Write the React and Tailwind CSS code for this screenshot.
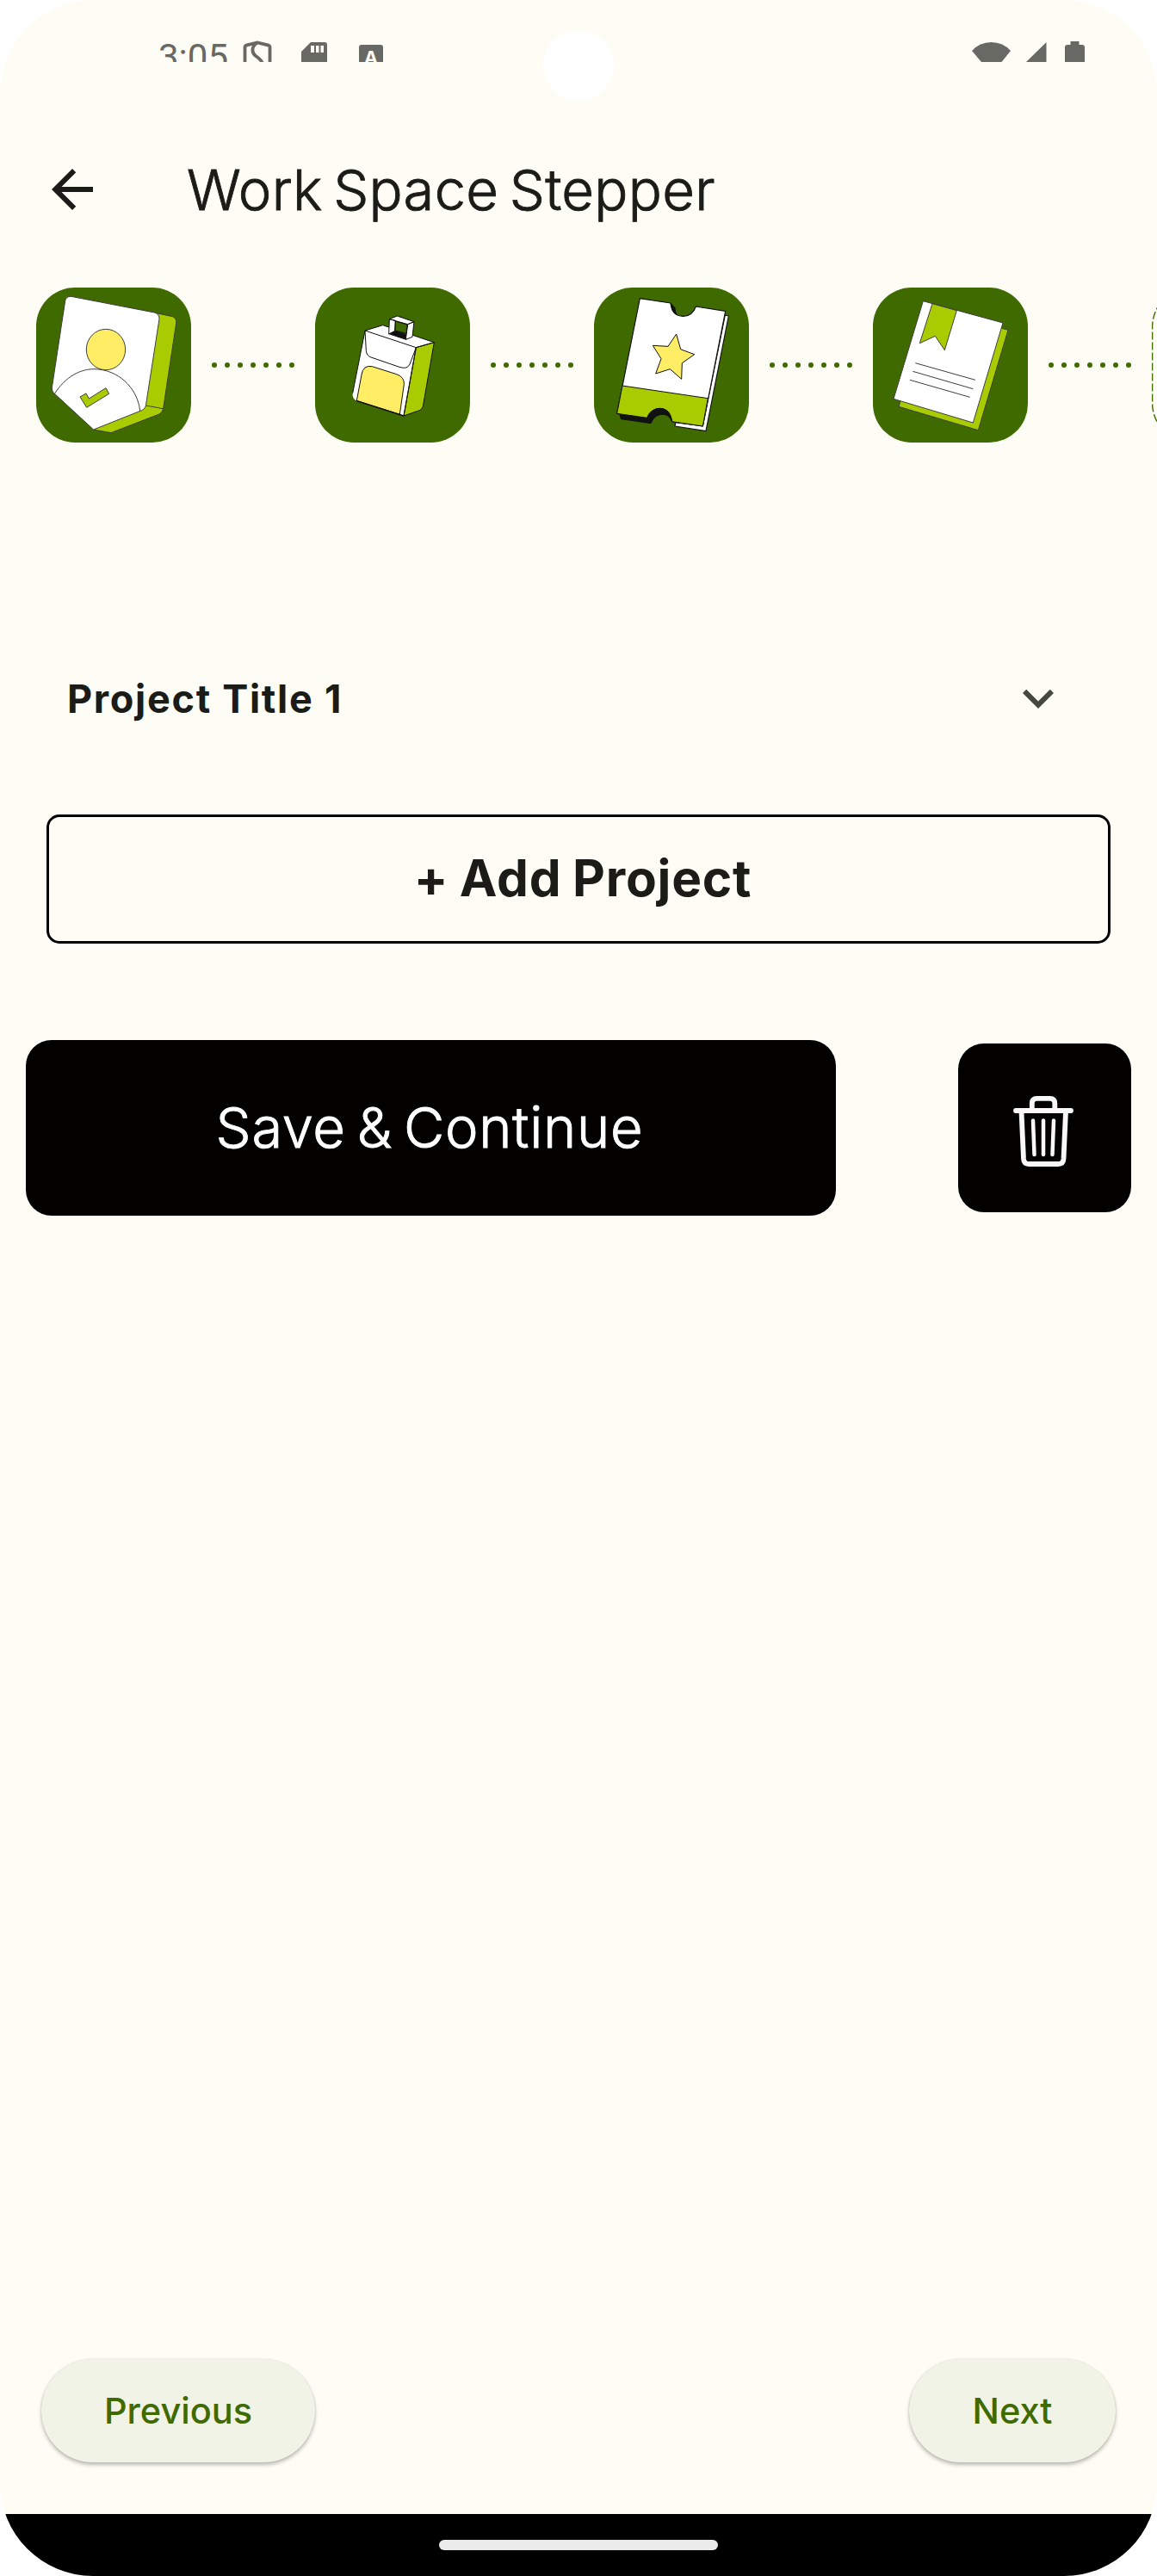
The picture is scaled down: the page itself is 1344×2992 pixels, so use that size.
const tileSvg = 'block size-full';

function BadgeArt() {
  return (
    <svg viewBox="66 42 540 540" className={tileSvg} stroke="#3f3f3f" strokeWidth="3" strokeLinejoin="round">
      <path d="M485 131 L541 143 Q556 148 554 166 L509 463 Q507 477 495 483 L327 548 L266 537 L440 440Z" fill="#a9cc00" />
      <path d="M188 73 L478 129 Q496 134 495 152 L449 448 Q448 463 434 470 L266 537 L127 409 Q121 404 121 391 L167 89 Q170 72 188 73Z" fill="#fff" />
      <path d="M131 411 C168 353 220 325 270 326 C350 328 418 388 428 471" fill="none" />
      <ellipse cx="309" cy="258" rx="68" ry="71" fill="#ffee65" />
      <path d="M448 453 L509 464" fill="none" />
      <path d="M219 423 L240 411 L250 429 L309 392 L320 412 L242 460Z" fill="#a9cc00" strokeLinejoin="miter" />
    </svg>
  );
}

function BackpackArt() {
  return (
    <svg viewBox="48 42 540 540" className={tileSvg} stroke="#111" strokeWidth="3" strokeLinejoin="round">
      <path d="M222 192 L284 173 L463 233 L400 251 L357 489 L192 436 Q177 428 179 410Z" fill="#fff" stroke="none" />
      <path d="M400 251 L463 233 L424 456 Q422 465 412 470 L357 489Z" fill="#a9cc00" />
      <path d="M179 410 L222 192 L284 173 L463 233 L400 251 L222 192 M400 251 L357 489" fill="none" />
      <path d="M222 192 L226 262 Q227 279 243 285 L342 319 Q370 328 378 309 L400 251" fill="none" />
      <path d="M193 436 L210 346 Q215 311 247 317 L332 344 Q360 354 358 379 L343 484Z" fill="#ffee65" />
      <path d="M193 437 L357 489" fill="none" strokeWidth="4" />
      <path d="M305 203 L327 192 L369 206 L365 223Z" fill="#111" />
      <path d="M307 152 L328 157 L326 193 L305 204Z M371 170 L393 161 L387 214 L364 223Z M307 152 L334 141 L393 161 L371 170Z" fill="#fff" />
      <path d="M328 159 L369 171 L366 202 L327 192Z" fill="#3e6a00" />
    </svg>
  );
}

function TicketArt() {
  return (
    <svg viewBox="30 42 540 540" className={tileSvg} stroke="#111" strokeWidth="3" strokeLinejoin="round">
      <path d="M487 138 L499 141 L420 542 L312 525 L314 512 L409 524Z" fill="#fff" strokeWidth="3.5" />
      <path d="M120 486 L216 496 Q232 462 262 462 Q290 466 301 497 L303 510 C290 482 275 484 266 484 C244 486 235 500 228 515 L124 500Z" fill="#111" />
      <path d="M190 80 L297 96 Q302 143 342 142 Q374 140 385 108 L488 124 L409 525 L302 509 C298 480 282 463 260 463 C236 464 221 478 215 496 L110 481Z" fill="#fff" strokeWidth="3.5" />
      <path d="M129 384 L427 428 L409 525 L302 509 C298 480 282 463 260 463 C236 464 221 478 215 496 L110 481Z" fill="#a9cc00" />
      <path d="M297 96 L300 110 Q304 130 318 136 Q312 127 312 113Z" fill="#111" />
      <path d="M217 495 C224 475 240 463 260 463 C285 464 298 480 301 507 C293 488 282 483 266 484 C246 485 236 497 228 513Z" fill="#111" />
      <path d="M317 204 L332 257 L380 275 L337 305 L335 361 L295 326 L245 342 L264 290 L235 244 L288 247Z" fill="#ffee65" />
    </svg>
  );
}

function DocumentArt() {
  return (
    <svg viewBox="30 42 540 540" className={tileSvg} stroke="#3f3f3f" strokeWidth="3">
      <path d="M226 115 L501 190 L397 539 L120 457Z" fill="#a9cc00" />
      <path d="M205 89 L483 165 L379 513 L102 430Z" fill="#fff" />
      <path d="M237 98 L322 122 L280 260 L247 211 L193 236Z" fill="#a9cc00" />
      <path d="M178 305 L387 364 M169 334 L379 395 M159 364 L368 424" fill="none" />
    </svg>
  );
}

function Connector() {
  return (
    <div className="mx-6 flex shrink-0 gap-[9px]">
      {[0, 1, 2, 3, 4, 5, 6].map((i) => (
        <span key={i} className="size-1.5 rounded-full bg-[#3e6a00]" />
      ))}
    </div>
  );
}

function StatusBar() {
  return (
    <div className="flex h-[72px] items-start justify-between overflow-hidden pr-[84px] pl-[184px] text-[#686864]">
      <div className="flex items-start">
        <span className="mt-[46px] w-[98px] font-['Roboto',sans-serif] text-[42px] leading-[42px] whitespace-nowrap">3:05</span>
        <svg className="mt-[47px] h-[25px] w-[34px]" viewBox="0 0 34 25" fill="none" stroke="currentColor" strokeWidth="3.8">
          <path d="M2.500 26V8Q2.500 6.200 4 5.700L17 2.500L30 5.700Q31.500 6.200 31.500 8V26M16.500 3C10 7 10 14 15 18C19 21 22 23 23 27" />
        </svg>
        <svg className="mt-[48px] ml-[34px] h-6 w-[30px]" viewBox="0 0 30 24">
          <path d="M0 12L11 1H27Q30 1 30 4V24H0Z" fill="currentColor" />
          <path d="M11 5h4v8h-4zM17 5h3.500v8H17zM22.500 5H26v8h-3.500z" fill="#fdfdf5" />
        </svg>
        <div className="mt-[52px] ml-[37px] h-8 w-7 rounded-[3px] bg-[#686864] text-center text-[22px] leading-[30px] font-bold text-[#fdfdf5]">A</div>
      </div>
      <svg className="mt-[47px] h-[25px] w-[131px]" viewBox="1129 47 131 25" fill="currentColor">
        <path d="M1129 59Q1138 49 1151.500 49Q1165 49 1174 59L1163.500 72H1140Z" />
        <path d="M1192 72L1215.500 49V72Z" />
        <path d="M1243.500 48H1253.500V52H1257Q1260 52 1260 55V72H1237V55Q1237 52 1240 52H1243.500Z" />
      </svg>
    </div>
  );
}

export default function App() {
  return (
    <div className="h-[2992px] w-[1344px] overflow-hidden bg-white">
      <div className="relative flex h-full flex-col overflow-hidden rounded-[108px] bg-[#fdfdf5] font-['Inter',sans-serif] text-[#1b1c18]">
        <StatusBar />
        <div className="absolute top-[35px] left-[631px] size-[82px] rounded-full bg-white" />

        <header className="mt-[52px] flex h-[192px] items-center pl-12">
          <svg className="size-[72px]" viewBox="0 0 24 24" fill="currentColor">
            <path d="M20 11H7.830l5.590-5.590L12 4l-8 8 8 8 1.410-1.410L7.830 13H20v-2z" />
          </svg>
          <h1 className="ml-[97px] pt-px text-[65px] leading-[78px] font-light tracking-[0.3px] whitespace-nowrap [-webkit-text-stroke:0.9px_currentColor] [word-spacing:-6px]">Work Space Stepper</h1>
        </header>

        <div className="mt-[18px] flex h-[180px] items-center overflow-hidden pl-[42px]">
          {[BadgeArt, BackpackArt, TicketArt, DocumentArt].map((Art, i) => (
            <div key={i} className="flex shrink-0 items-center">
              <div className="size-[180px] shrink-0 rounded-[45px] bg-[#3e6a00]">
                <Art />
              </div>
              <Connector />
            </div>
          ))}
          <svg className="size-[180px] shrink-0" viewBox="0 0 180 180" fill="none" stroke="#3e6a00" strokeWidth="1.4">
            <rect x="0.600" y="0.600" width="178.800" height="178.800" rx="45" strokeDasharray="9 3" />
          </svg>
        </div>

        <div className="mt-[225px] flex h-[144px] items-center justify-between pr-[102px] pl-[78px]">
          <span className="pt-[2px] text-[45px] leading-[60px] font-bold tracking-[1.7px] whitespace-nowrap">Project Title 1</span>
          <svg className="size-[72px]" viewBox="0 0 24 24" fill="#44483d">
            <path d="M16.590 8.590L12 13.170 7.410 8.590 6 10l6 6 6-6z" />
          </svg>
        </div>

        <button className="mx-[54px] mt-[63px] flex h-[150px] items-center justify-center rounded-[15px] border-3 border-black pb-[3px] pl-[10px] text-[58.500px] leading-[72px] font-bold tracking-[0.8px] whitespace-nowrap [word-spacing:-2px]">
          + Add Project
        </button>

        <div className="mt-[112px] flex items-center justify-between pr-[30px] pl-[30px]">
          <button className="flex h-[204px] w-[941px] items-center justify-center rounded-[30px] bg-[#030000] pr-[3px] text-[65px] leading-[78px] font-light tracking-[0.7px] whitespace-nowrap text-white [-webkit-text-stroke:0.9px_currentColor] [word-spacing:-6px]">
            Save &amp; Continue
          </button>
          <button className="flex h-[196px] w-[201px] items-center justify-center rounded-[30px] bg-[#030000]">
            <svg className="mt-2 mr-[3px] h-[84px] w-[72px]" viewBox="1176 1272 72 84" fill="none" stroke="#f8f8f8" strokeWidth="5.8" strokeLinecap="round" strokeLinejoin="round">
              <path d="M1180 1290H1244M1198.800 1289V1281.500Q1198.800 1275.800 1204.500 1275.800H1219.500Q1225.300 1275.800 1225.300 1281.500V1289M1186.500 1291L1189 1346Q1189.500 1352 1195 1352H1229.500Q1235 1352 1235.500 1346L1238 1291" />
              <path d="M1200 1301.500L1201.500 1341M1212 1301.500V1341M1224 1301.500L1222.500 1341" strokeWidth="4.500" />
            </svg>
          </button>
        </div>

        <div className="mt-auto mb-[60px] flex justify-between px-12 text-[41.500px] font-medium text-[#3e6a00]">
          <button className="h-[120px] w-[318px] rounded-full bg-[#f1f3e6] whitespace-nowrap shadow-[0_3px_4px_rgba(0,0,0,0.25),0_0_2px_rgba(0,0,0,0.12)]">Previous</button>
          <button className="h-[120px] w-[240px] rounded-full bg-[#f1f3e6] whitespace-nowrap shadow-[0_3px_4px_rgba(0,0,0,0.25),0_0_2px_rgba(0,0,0,0.12)]">Next</button>
        </div>

        <div className="flex h-[72px] items-center justify-center bg-black">
          <div className="h-3 w-[324px] rounded-full bg-[#ebebeb]" />
        </div>
      </div>
    </div>
  );
}
